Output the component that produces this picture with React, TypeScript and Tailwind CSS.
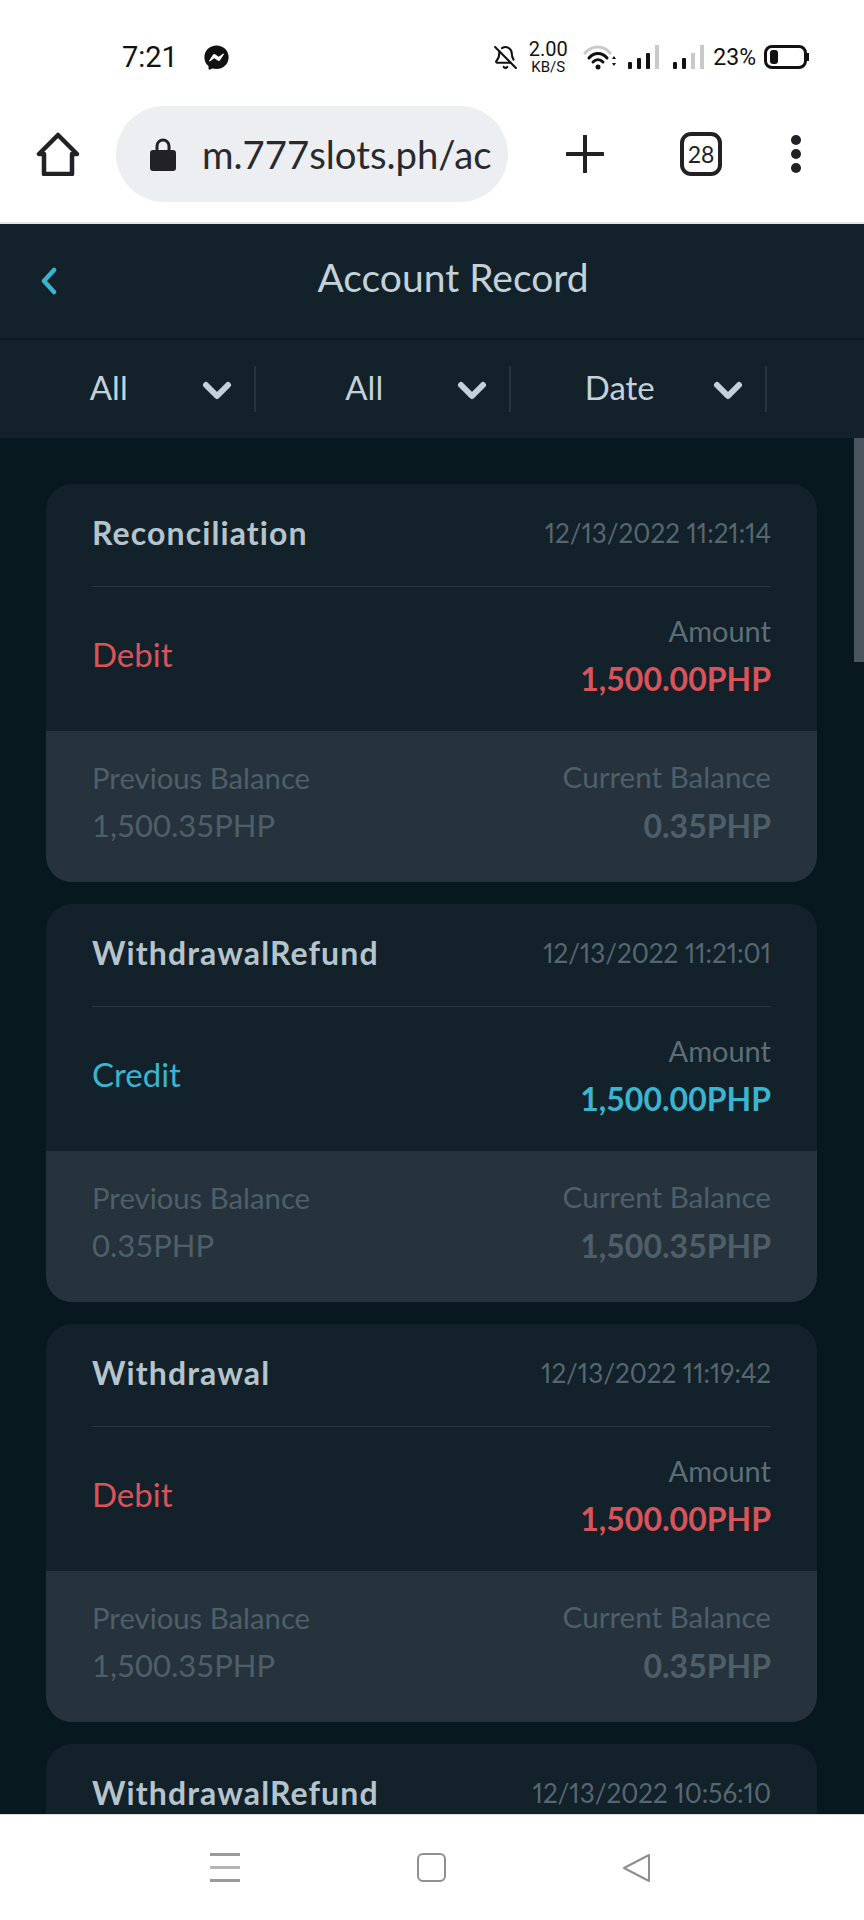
import { BellOff } from 'lucide-react';
import { FaFacebookMessenger } from 'react-icons/fa';

// Account record list as seen inside a mobile browser

type AccountRecord = {
  title: string;
  date: string;
  kind: 'Debit' | 'Credit';
  amount: string;
  previous: string;
  current: string;
};

const RECORDS: AccountRecord[] = [
  { title: 'Reconciliation', date: '12/13/2022 11:21:14', kind: 'Debit', amount: '1,500.00PHP', previous: '1,500.35PHP', current: '0.35PHP' },
  { title: 'WithdrawalRefund', date: '12/13/2022 11:21:01', kind: 'Credit', amount: '1,500.00PHP', previous: '0.35PHP', current: '1,500.35PHP' },
  { title: 'Withdrawal', date: '12/13/2022 11:19:42', kind: 'Debit', amount: '1,500.00PHP', previous: '1,500.35PHP', current: '0.35PHP' },
  { title: 'WithdrawalRefund', date: '12/13/2022 10:56:10', kind: 'Credit', amount: '1,500.00PHP', previous: '0.35PHP', current: '1,500.35PHP' },
];

function SignalBars({ active }: { active: number }) {
  const heights = [7, 11, 16, 24];
  return (
    <div className="flex items-end gap-[5px]">
      {heights.map((h, i) => (
        <div
          key={h}
          className={i < active ? 'w-[4px] rounded-[1px] bg-[#111]' : 'w-[4px] bg-[#c9c9c9]'}
          style={{ height: h }}
        />
      ))}
    </div>
  );
}

function StatusBar() {
  return (
    <div className="flex h-[88px] items-center pl-[122px] pr-[55px] pt-[26px] font-['Roboto',sans-serif] text-[#111]">
      <span className="text-[29px] leading-none">7:21</span>
      <FaFacebookMessenger className="ml-[26px] h-[25px] w-[25px]" />
      <div className="ml-auto flex items-center">
        <BellOff className="h-[25px] w-[25px]" strokeWidth={2} />
        <div className="ml-[9px] flex w-[42px] flex-col items-center">
          <span className="text-[20px] leading-[20px]">2.00</span>
          <span className="text-[15px] leading-[16px]">KB/S</span>
        </div>
        <svg viewBox="0 0 34 26" className="ml-[14px] h-[26px] w-[34px]" fill="none">
          <path d="M2 9 C9 1 21 1 27 9" stroke="#c9c9c9" strokeWidth="3" strokeLinecap="round" />
          <path d="M6 14 C11 8 19 8 24 14" stroke="#111" strokeWidth="3" strokeLinecap="round" />
          <path d="M10 18 C13 15 17 15 20 18" stroke="#111" strokeWidth="3" strokeLinecap="round" />
          <circle cx="15" cy="23" r="2.5" fill="#111" />
          <path d="M29 15 L31 12 L33 15 Z M29 19 L31 22 L33 19 Z" fill="#111" />
        </svg>
        <div className="ml-[11px]">
          <SignalBars active={3} />
        </div>
        <div className="ml-[14px]">
          <SignalBars active={2} />
        </div>
        <span className="ml-[9px] text-[23px] leading-none">23%</span>
        <div className="ml-[8px] flex h-[24px] w-[43px] items-center rounded-[8px] border-[3px] border-[#111] px-[3px]">
          <div className="h-[14px] w-[8px] rounded-[3px] bg-[#111]" />
        </div>
        <div className="h-[8px] w-[2px] bg-[#111]" />
      </div>
    </div>
  );
}

function BrowserBar() {
  return (
    <div className="flex h-[136px] items-center border-b-2 border-[#e3e6e8] pb-[2px] font-['Lato',sans-serif]">
      <svg viewBox="0 0 44 44" className="ml-[36px] h-[44px] w-[44px]" fill="none">
        <path d="M8 42 H36 V22 H41 L22 3 L3 22 H8 Z" stroke="#222226" strokeWidth="4.5" strokeLinejoin="round" />
      </svg>
      <div className="ml-[36px] flex h-[96px] w-[392px] items-center rounded-full bg-[#eceef2] pl-[34px]">
        <svg viewBox="0 0 26 34" className="h-[34px] w-[26px]" fill="none">
          <path d="M7 14 V9 A6 6 0 0 1 19 9 V14" stroke="#222226" strokeWidth="3" />
          <rect x="0" y="13" width="26" height="21" rx="3" fill="#222226" />
        </svg>
        <span className="ml-[26px] text-[38.3px] leading-none text-[#2a2a2e]">m.777slots.ph/ac</span>
      </div>
      <svg viewBox="0 0 38 38" className="ml-[58px] h-[38px] w-[38px]" fill="none">
        <path d="M19 1 V37 M1 19 H37" stroke="#222226" strokeWidth="4" strokeLinecap="round" />
      </svg>
      <div className="ml-[76px] flex h-[44px] w-[42px] items-center justify-center rounded-[11px] border-[4px] border-[#222226] text-[23px] text-[#222226]">
        28
      </div>
      <div className="ml-[69px] flex flex-col gap-[4px]">
        <div className="h-[10px] w-[10px] rounded-full bg-[#222226]" />
        <div className="h-[10px] w-[10px] rounded-full bg-[#222226]" />
        <div className="h-[10px] w-[10px] rounded-full bg-[#222226]" />
      </div>
    </div>
  );
}

function Chevron() {
  return (
    <svg viewBox="0 0 30 20" className="mt-[4px] h-[20px] w-[30px]" fill="none">
      <path d="M4 4 L15 15 L26 4" stroke="#c3d1d9" strokeWidth="6" strokeLinecap="round" strokeLinejoin="round" />
    </svg>
  );
}

function FilterCell({ label }: { label: string }) {
  return (
    <div className="relative flex h-[46px] w-[255.5px] items-center justify-end border-r-2 border-[#273540] pr-[22px]">
      <span className="absolute left-0 right-[36px] mb-[3px] text-center text-[33px] leading-none text-[#c3d1d9]">{label}</span>
      <Chevron />
    </div>
  );
}

function RecordCard({ record }: { record: AccountRecord }) {
  const accent = record.kind === 'Debit' ? 'text-[#d9545a]' : 'text-[#3bb4cf]';
  return (
    <div className="h-[398px] shrink-0 overflow-hidden rounded-[26px] bg-[#12212a]">
      <div className="mx-[46px] flex h-[103px] items-center justify-between border-b border-[#2a3740] pb-[4px]">
        <span className="text-[32px] font-bold tracking-[1.1px] text-[#b5c4cc]">{record.title}</span>
        <span className="text-[26px] text-[#566770] proportional-nums">{record.date}</span>
      </div>
      <div className="mx-[46px] flex h-[144px] items-center justify-between pb-[8px]">
        <span className={`text-[33px] ${accent}`}>{record.kind}</span>
        <div className="flex flex-col items-end gap-[18px] leading-none">
          <span className="text-[29px] text-[#5e6e77]">Amount</span>
          <span className={`text-[32px] font-bold ${accent}`}>{record.amount}</span>
        </div>
      </div>
      <div className="flex h-[151px] items-center justify-between bg-[#26333c] px-[46px] pb-[9px] leading-none text-[#4f5f69]">
        <div className="flex flex-col gap-[18px]">
          <span className="text-[29.3px]">Previous Balance</span>
          <span className="text-[31px]">{record.previous}</span>
        </div>
        <div className="flex flex-col items-end gap-[18px]">
          <span className="text-[29.6px]">Current Balance</span>
          <span className="text-[32px] font-bold">{record.current}</span>
        </div>
      </div>
    </div>
  );
}

export default function App() {
  return (
    <div className="flex h-[1920px] w-[864px] flex-col overflow-hidden bg-white">
      <StatusBar />
      <BrowserBar />

      <div className="flex min-h-0 flex-1 flex-col bg-[#08181f] font-['Lato',sans-serif]">
        <header className="relative flex h-[116px] shrink-0 items-center justify-center border-b-2 border-[#0b1a21] bg-[#12212a] pb-[8px] pl-[42px]">
          <svg viewBox="0 0 18 28" className="absolute left-[40px] top-[43px] h-[28px] w-[18px]" fill="none">
            <path d="M14 3 L4 14 L14 25" stroke="#3bb4cf" strokeWidth="4.5" strokeLinecap="round" strokeLinejoin="round" />
          </svg>
          <h1 className="text-[39px] text-[#c3d1d9]">Account Record</h1>
        </header>

        <div className="flex h-[98px] shrink-0 items-center bg-[#12212a]">
          <FilterCell label="All" />
          <FilterCell label="All" />
          <FilterCell label="Date" />
        </div>

        <div className="relative min-h-0 flex-1 overflow-hidden">
          <div className="flex flex-col gap-[22px] pl-[46px] pr-[47px] pt-[46px]">
            {RECORDS.map((r) => (
              <RecordCard key={r.date} record={r} />
            ))}
          </div>
          {/* scrollbar thumb */}
          <div className="absolute right-0 top-0 h-[224px] w-[10px] bg-[#4a565d]" />
        </div>
      </div>

      <nav className="flex h-[106px] shrink-0 items-start justify-center gap-[177px] border-t border-[#d7dcde] bg-white pr-[3px] pt-[38px]">
        <div className="flex h-[29px] w-[30px] flex-col justify-between">
          <div className="h-[3px] bg-[#9a9a9a]" />
          <div className="h-[3px] bg-[#b5b5b5]" />
          <div className="h-[3px] bg-[#9a9a9a]" />
        </div>
        <div className="h-[29px] w-[29px] rounded-[6px] border-2 border-[#8f8f8f]" />
        <svg viewBox="0 0 28 30" className="h-[30px] w-[28px]" fill="none">
          <path d="M26 2 V28 L1 15 Z" stroke="#8f8f8f" strokeWidth="2" strokeLinejoin="round" />
        </svg>
      </nav>
    </div>
  );
}
